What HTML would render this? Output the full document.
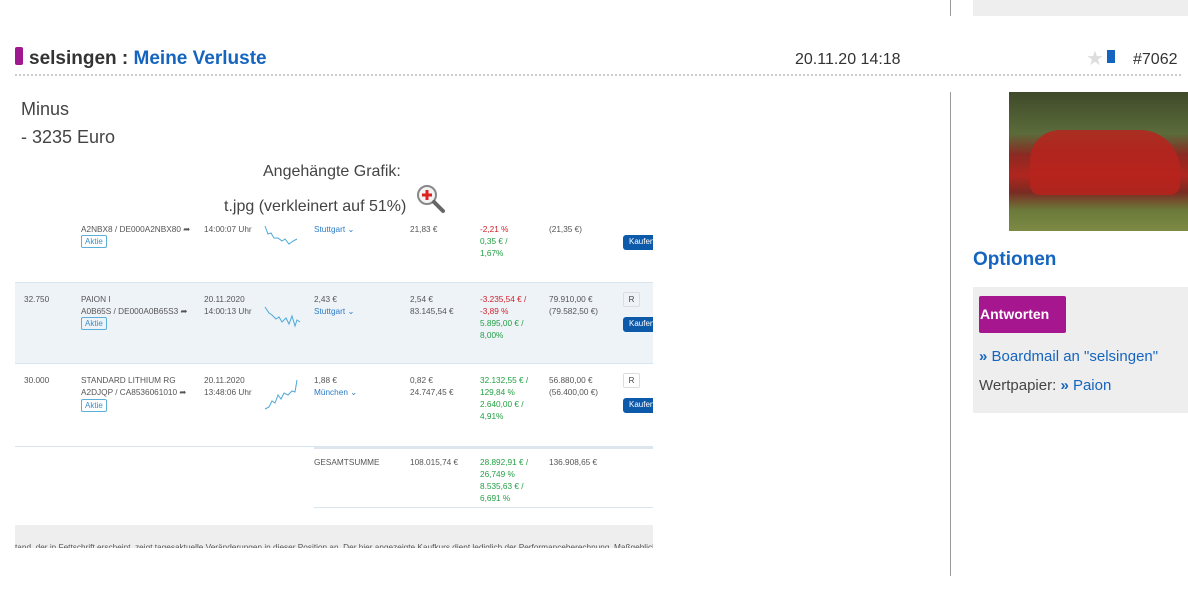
<!DOCTYPE html>
<html><head><meta charset="utf-8"><style>
*{margin:0;padding:0;box-sizing:border-box}
body{width:1188px;height:607px;background:#fff;font-family:"Liberation Sans",sans-serif;position:relative;overflow:hidden;color:#333}
.a{position:absolute;white-space:nowrap}
.t{position:absolute;white-space:nowrap;font-size:8.5px;color:#555;line-height:12px;font-family:"Liberation Sans",sans-serif;transform:scaleX(.97);transform-origin:left top}
.bl{color:#2a7bc4}.rd{color:#d0202a}.gr{color:#22a043}
.tag{position:absolute;border:1px solid #5ab0d8;color:#3b8fc4;font-size:8px;padding:0 3px;border-radius:2px;line-height:11px}
.kauf{position:absolute;left:623px;width:30px;height:15px;background:#0d5aab;color:#fff;font-size:8px;padding:2px 0 0 6px;border-radius:3px 0 0 3px}
.r{position:absolute;left:623px;width:17px;height:15px;border:1px solid #ddd;font-size:8px;text-align:center;line-height:13px;border-radius:2px;color:#444}
</style></head><body>
<div class="a" style="left:950px;top:0;width:1px;height:16px;background:#999"></div>
<div class="a" style="left:973px;top:0;width:215px;height:16px;background:#eee"></div>
<div class="a" style="left:15px;top:47px;width:8px;height:18px;background:#a01890;border-radius:2px"></div>
<div class="a" style="left:29px;top:48px;font-size:19px;font-weight:bold;color:#333">selsingen : <span style="color:#1565c0">Meine Verluste</span></div>
<div class="a" style="left:795px;top:51px;font-size:16px;color:#333">20.11.20 14:18</div>
<div class="a" style="left:1086px;top:46px;font-size:20px;color:#ddd">★</div>
<div class="a" style="left:1107px;top:50px;width:8px;height:13px;background:#1565c0"></div>
<div class="a" style="left:1133px;top:51px;font-size:16px;color:#333">#7062</div>
<div class="a" style="left:15px;top:74px;width:1166px;border-top:2px dotted #ccc"></div>
<div class="a" style="left:950px;top:92px;width:1px;height:484px;background:#999"></div>
<div class="a" style="left:21px;top:95px;font-size:18px;line-height:28px;color:#444">Minus<br>- 3235 Euro</div>
<div class="a" style="left:263px;top:163px;font-size:16px;color:#444">Angehängte Grafik:</div>
<div class="a" style="left:224px;top:198px;font-size:16px;color:#444">t.jpg (verkleinert auf 51%)</div>
<svg class="a" style="left:415px;top:184px" width="32" height="30"><circle cx="12" cy="11" r="9" fill="#f4f4f4" stroke="#888" stroke-width="2"/><path d="M12 6v10M7 11h10" stroke="#d22" stroke-width="3"/><path d="M19 18l9 9" stroke="#666" stroke-width="4" stroke-linecap="round"/></svg>
<div class="a" style="left:15px;top:218px;width:638px;height:330px;overflow:hidden">
<div class="a" style="left:0;top:64px;width:638px;height:82px;background:#eef3f8;border-top:1px solid #d8e4ee;border-bottom:1px solid #d8e4ee"></div>
<div class="a" style="left:0;top:228px;width:638px;height:1px;background:#d8e4ee"></div>
<div class="a" style="left:299px;top:228px;width:339px;height:3px;background:#dde6ee"></div>
<div class="a" style="left:299px;top:289px;width:339px;height:1px;background:#d8e4ee"></div>
<div class="a" style="left:0;top:307px;width:638px;height:23px;background:#eee"></div>
</div>
<div class="t" style="left:81px;top:223px">A2NBX8 / DE000A2NBX80 ➦</div>
<div class="tag" style="left:81px;top:235px">Aktie</div>
<div class="t" style="left:204px;top:223px">14:00:07 Uhr</div>
<svg class="a" style="left:264px;top:224px" width="38" height="26"><path d="M1 2l3 8 3-1 3 5 4 0 4 3 3-2 4 5 4-3 4-2" stroke="#4aa8d8" fill="none"/></svg>
<div class="t bl" style="left:314px;top:223px">Stuttgart ⌄</div>
<div class="t" style="left:410px;top:223px">21,83 €</div>
<div class="t" style="left:480px;top:223px"><span class="rd">-2,21 %</span><br><span class="gr">0,35 € /<br>1,67%</span></div>
<div class="t" style="left:549px;top:223px">(21,35 €)</div>
<div class="kauf" style="top:235px">Kaufen</div>

<div class="t" style="left:24px;top:293px">32.750</div>
<div class="t" style="left:81px;top:293px">PAION I<br>A0B65S / DE000A0B65S3 ➦</div>
<div class="tag" style="left:81px;top:317px">Aktie</div>
<div class="t" style="left:204px;top:293px">20.11.2020<br>14:00:13 Uhr</div>
<svg class="a" style="left:264px;top:305px" width="38" height="30"><path d="M1 2l4 6 3 2 4 4 3-2 3 5 4-4 3 6 3-8 3 10 2-6 3 2" stroke="#4aa8d8" fill="none"/></svg>
<div class="t" style="left:314px;top:293px">2,43 €<br><span class="bl">Stuttgart ⌄</span></div>
<div class="t" style="left:410px;top:293px">2,54 €<br>83.145,54 €</div>
<div class="t" style="left:480px;top:293px"><span class="rd">-3.235,54 € /<br>-3,89 %</span><br><span class="gr">5.895,00 € /<br>8,00%</span></div>
<div class="t" style="left:549px;top:293px">79.910,00 €<br>(79.582,50 €)</div>
<div class="r" style="top:292px">R</div>
<div class="kauf" style="top:317px">Kaufen</div>

<div class="t" style="left:24px;top:374px">30.000</div>
<div class="t" style="left:81px;top:374px">STANDARD LITHIUM RG<br>A2DJQP / CA8536061010 ➦</div>
<div class="tag" style="left:81px;top:399px">Aktie</div>
<div class="t" style="left:204px;top:374px">20.11.2020<br>13:48:06 Uhr</div>
<svg class="a" style="left:264px;top:380px" width="38" height="32"><path d="M1 29l4-2 3-6 3 2 3-8 3 4 3-6 4 2 4-4 3 1 2-12" stroke="#4aa8d8" fill="none"/></svg>
<div class="t" style="left:314px;top:374px">1,88 €<br><span class="bl">München ⌄</span></div>
<div class="t" style="left:410px;top:374px">0,82 €<br>24.747,45 €</div>
<div class="t gr" style="left:480px;top:374px">32.132,55 € /<br>129,84 %<br>2.640,00 € /<br>4,91%</div>
<div class="t" style="left:549px;top:374px">56.880,00 €<br>(56.400,00 €)</div>
<div class="r" style="top:373px">R</div>
<div class="kauf" style="top:398px">Kaufen</div>

<div class="t" style="left:314px;top:456px">GESAMTSUMME</div>
<div class="t" style="left:410px;top:456px">108.015,74 €</div>
<div class="t gr" style="left:480px;top:456px">28.892,91 € /<br>26,749 %<br>8.535,63 € /<br>6,691 %</div>
<div class="t" style="left:549px;top:456px">136.908,65 €</div>
<div class="a" style="left:15px;top:541px;width:638px;height:7px;overflow:hidden"><div class="t" style="left:0;top:0">tand, der in Fettschrift erscheint, zeigt tagesaktuelle Veränderungen in dieser Position an. Der hier angezeigte Kaufkurs dient lediglich der Performanceberechnung. Maßgeblich</div></div>

<div class="a" style="left:1009px;top:92px;width:179px;height:139px;background:linear-gradient(180deg,#3f4a2a 0%,#5b6b3a 30%,#8a2a22 45%,#b0261f 60%,#7a2a22 72%,#6b7a3a 85%,#7d8a45 100%)"></div>
<div class="a" style="left:1030px;top:130px;width:150px;height:65px;background:#b8231d;border-radius:30px 40px 10px 10px;opacity:.85"></div>
<div class="a" style="left:973px;top:249px;font-size:19px;font-weight:bold;color:#1565c0">Optionen</div>
<div class="a" style="left:973px;top:287px;width:215px;height:126px;background:#eee"></div>
<div class="a" style="left:979px;top:296px;width:87px;height:37px;background:#a5168f;border-radius:2px;color:#fff;font-weight:bold;font-size:14px;padding:10px 0 0 1px">Antworten</div>
<div class="a" style="left:979px;top:348px;font-size:15px;color:#1565c0"><b>»</b> Boardmail an "selsingen"</div>
<div class="a" style="left:979px;top:377px;font-size:15px;color:#444">Wertpapier: <span style="color:#1565c0"><b>»</b> Paion</span></div>
</body></html>
